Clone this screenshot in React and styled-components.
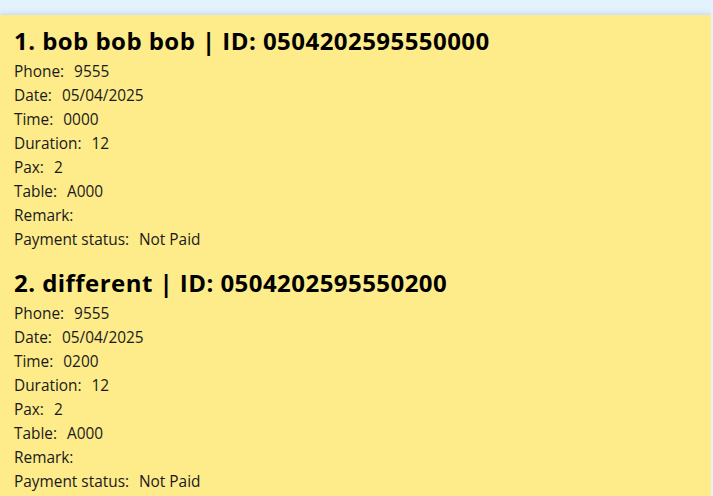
import React from 'react'
import styled, { createGlobalStyle } from 'styled-components'

const GlobalStyle = createGlobalStyle`
  html, body {
    margin: 0;
    padding: 0;
    background: #e3f2fd;
    font-family: "Open Sans", "Noto Sans", Arial, sans-serif;
  }
`

const Page = styled.div`
  padding-top: 15px;
  width: 711px;
  height: 481px;
  overflow: hidden;
`

const Panel = styled.div`
  background: #feeb8a;
  box-shadow: 0 0 6px rgba(100, 130, 160, 0.35);
  padding: 11px 14px 20px;
  display: flex;
  flex-direction: column;
  gap: 16px;
  height: 100%;
  box-sizing: border-box;
`

const Entry = styled.div`
  display: flex;
  flex-direction: column;
`

const Title = styled.h2`
  margin: 0 0 4px;
  font-size: 24px;
  line-height: 30px;
  letter-spacing: 0.45px;
  font-weight: 700;
  color: #000;
`

const Row = styled.div`
  font-size: 15.4px;
  line-height: 24px;
  color: #1a1a1a;
`

const Value = styled.span`
  margin-left: 6px;
`

const bookings = [
  { name: 'bob bob bob', id: '0504202595550000', time: '0000' },
  { name: 'different', id: '0504202595550200', time: '0200' },
]

const App = () => (
  <>
    <GlobalStyle />
    <Page>
      <Panel>
        {bookings.map((b, i) => (
          <Entry key={b.id}>
            <Title>{i + 1}. {b.name} | ID: {b.id}</Title>
            <Row>Phone: <Value>9555</Value></Row>
            <Row>Date: <Value>05/04/2025</Value></Row>
            <Row>Time: <Value>{b.time}</Value></Row>
            <Row>Duration: <Value>12</Value></Row>
            <Row>Pax: <Value>2</Value></Row>
            <Row>Table: <Value>A000</Value></Row>
            <Row>Remark: </Row>
            <Row>Payment status: <Value>Not Paid</Value></Row>
          </Entry>
        ))}
      </Panel>
    </Page>
  </>
)

export default App
